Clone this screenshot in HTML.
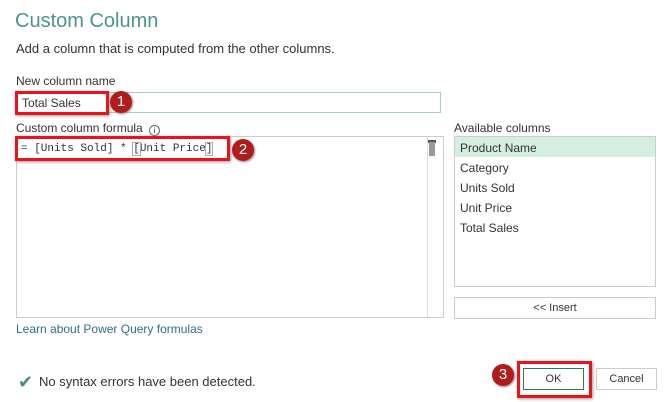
<!DOCTYPE html>
<html><head><style>
body{margin:0;width:667px;height:402px;background:#fff;position:relative;overflow:hidden;font-family:"Liberation Sans",sans-serif;color:#333;}
div,span{position:absolute;box-sizing:border-box;}
.t{white-space:nowrap;font-size:12px;}
.circ{width:22px;height:22px;border-radius:50%;background:#b01c1c;color:#fff;font-size:15px;text-align:center;line-height:22px;box-shadow:1px 1px 2px #888;}
.red{border:3px solid #e8141b;box-shadow:1px 1px 3px #999;}
</style></head><body>
<div class="t" style="left:15px;top:10px;font-size:20px;color:#4a9490;">Custom Column</div>
<div class="t" style="left:16px;top:41px;font-size:13px;">Add a column that is computed from the other columns.</div>
<div class="t" style="left:16px;top:74px;">New column name</div>
<div style="left:16px;top:92px;width:425px;height:21px;border:1px solid #9fd3b5;"></div>
<div class="red" style="left:15px;top:91px;width:94px;height:24px;"></div>
<div class="t" style="left:22px;top:96px;">Total Sales</div>
<div class="circ" style="left:110px;top:91px;">1</div>
<div class="t" style="left:16px;top:121px;">Custom column formula <span style="position:relative;display:inline-block;width:11px;height:11px;border:1px solid #666;border-radius:50%;font-size:8px;text-align:center;line-height:10px;vertical-align:-1px;margin-left:3px;">i</span></div>
<div style="left:16px;top:136px;width:428px;height:182px;border:1px solid #ccc;"></div>
<div style="left:427px;top:137px;width:1px;height:180px;background:#ddd;"></div>
<div style="left:428px;top:140px;width:8px;height:3px;background:#555;"></div>
<div style="left:429px;top:142px;width:6px;height:14px;background:#999;"></div>
<div class="red" style="left:15px;top:136px;width:215px;height:25px;"></div>
<div class="t" style="left:21px;top:143px;font-family:'Liberation Mono',monospace;font-size:11px;">= [Units Sold] * <span style="position:relative;outline:1px solid #aaa;">[</span>Unit Price<span style="position:relative;outline:1px solid #aaa;">]</span></div>
<div class="circ" style="left:232px;top:139px;">2</div>
<div class="t" style="left:16px;top:322px;color:#2e6d8e;">Learn about Power Query formulas</div>
<div class="t" style="left:18px;top:372px;font-size:18px;color:#4a8f6e;">✔</div>
<div class="t" style="left:39px;top:374px;font-size:13px;">No syntax errors have been detected.</div>
<div class="t" style="left:454px;top:121px;">Available columns</div>
<div style="left:454px;top:136px;width:202px;height:151px;border:1px solid #ccc;"></div>
<div style="left:455px;top:137px;width:200px;height:20px;background:#d4eee0;"></div>
<div class="t" style="left:460px;top:141px;">Product Name</div>
<div class="t" style="left:460px;top:161px;">Category</div>
<div class="t" style="left:460px;top:181px;">Units Sold</div>
<div class="t" style="left:460px;top:201px;">Unit Price</div>
<div class="t" style="left:460px;top:221px;">Total Sales</div>
<div style="left:454px;top:297px;width:202px;height:22px;border:1px solid #ccc;font-size:11px;text-align:center;line-height:20px;">&lt;&lt; Insert</div>
<div class="red" style="left:517px;top:361px;width:75px;height:37px;"></div>
<div style="left:523px;top:368px;width:61px;height:22px;border:1px solid #2f7a4f;font-size:11px;text-align:center;line-height:20px;">OK</div>
<div style="left:596px;top:368px;width:61px;height:22px;border:1px solid #ccc;font-size:11px;text-align:center;line-height:20px;">Cancel</div>
<div class="circ" style="left:492px;top:364px;">3</div>
</body></html>
